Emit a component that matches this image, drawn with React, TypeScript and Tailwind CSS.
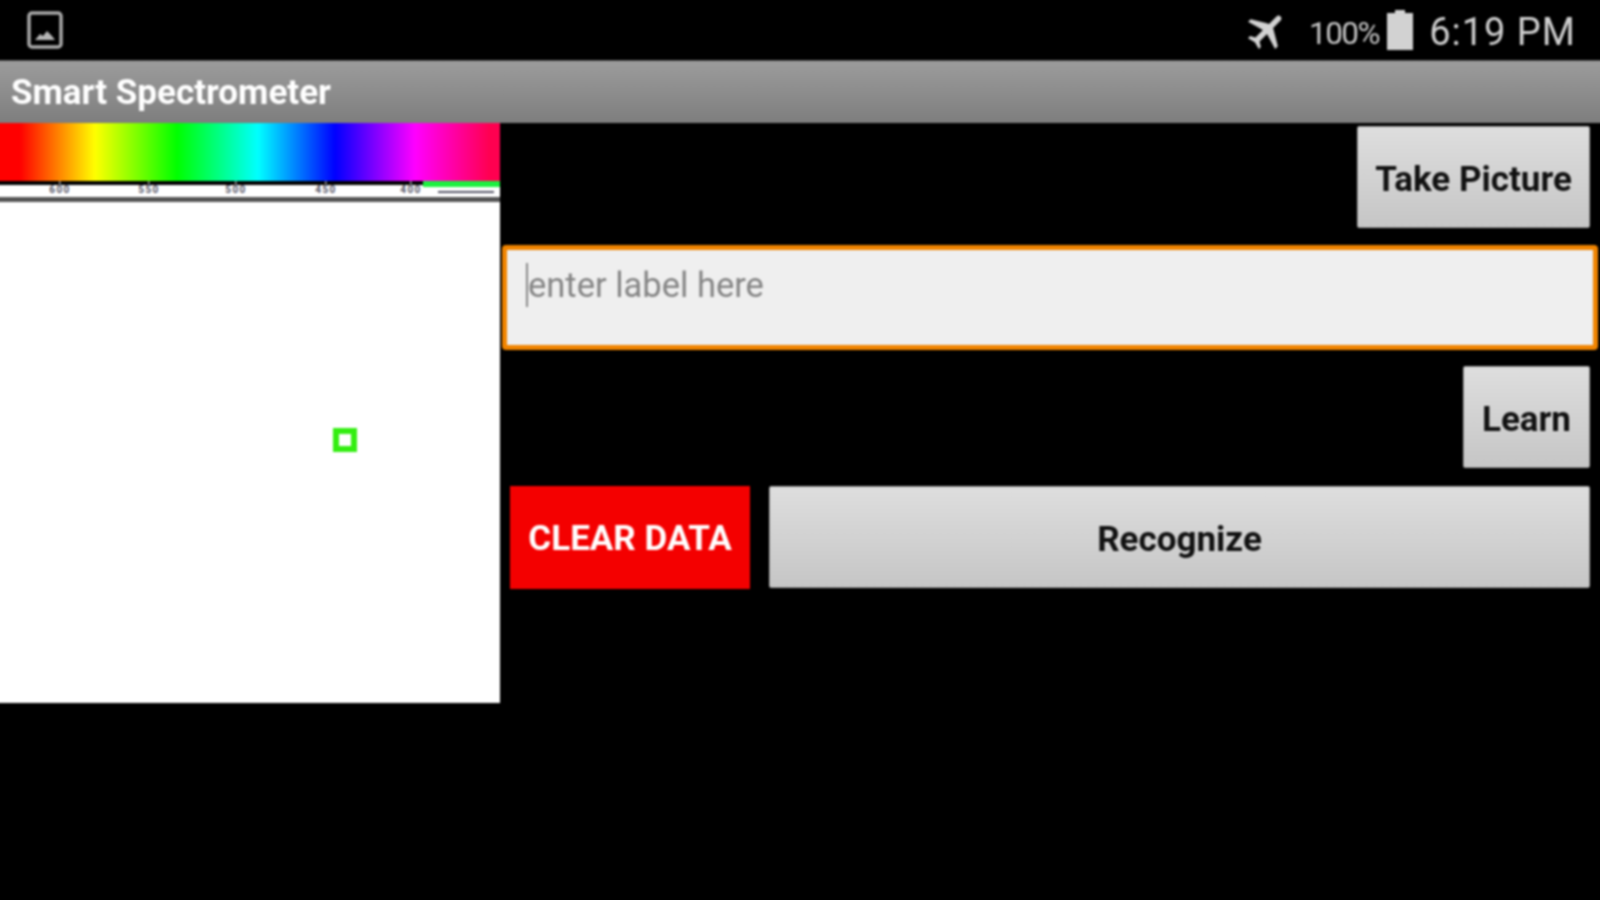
import { MdAirplanemodeActive } from "react-icons/md";

const RULER_LABELS = [
  { x: 65, text: "600" },
  { x: 154, text: "550" },
  { x: 241, text: "500" },
  { x: 331, text: "450" },
  { x: 416, text: "400" },
];

const BUTTON =
  "flex items-center justify-center h-[102px] pt-[6px] bg-gradient-to-b from-[#dedede] to-[#c6c6c6] border border-[#9a9a9a] rounded-[2px] text-[#111] text-[35px] font-bold";

function PictureIcon() {
  return (
    <svg width="36" height="38" viewBox="0 0 36 38" fill="none">
      <rect x="2" y="2" width="32" height="34" rx="3" stroke="#a8a8a8" strokeWidth="3.5" />
      <path d="M8 29 L13 23 L16 25 L20 20 L25 25 L28 29 Z" fill="#b5b5b5" />
    </svg>
  );
}

function Battery() {
  return (
    <svg width="26" height="40" viewBox="0 0 26 40" className="block">
      <path d="M8 0 H18 V3 H26 V40 H0 V3 H8 Z" fill="#d2d2d2" />
    </svg>
  );
}

// includes 5px bleed on the left so the blur doesn't darken the page edge
function Ruler() {
  return (
    <svg width="505" height="21" viewBox="0 0 505 21" className="block">
      <rect width="505" height="4" fill="#000" />
      <rect y="4" width="505" height="12" fill="#fff" />
      <rect x="428" y="0" width="77" height="6" fill="#1cf040" />
      <rect y="16" width="505" height="5" fill="#555" />
      {RULER_LABELS.map(({ x, text }) => (
        <g key={text}>
          <rect x={x - 1} y="0" width="1.5" height="5" fill="#999" />
          <text x={x} y="12" textAnchor="middle" fontSize="10" fontWeight="700" letterSpacing="1.5" fill="#556" fontFamily="Roboto, sans-serif">
            {text}
          </text>
        </g>
      ))}
      <rect x="443" y="10" width="56" height="2" fill="#556" />
    </svg>
  );
}

export default function App() {
  return (
    <div className="w-[1600px] h-[900px] bg-black overflow-hidden">
      <div className="w-[1610px] h-[900px] -ml-[5px] flex flex-col font-['Roboto',sans-serif] blur-[0.8px]">
        {/* Status bar */}
        <div className="h-[60px] shrink-0 flex items-center justify-between pl-[32px] pr-[29px]">
          <PictureIcon />
          <div className="flex items-center text-[#d2d2d2]">
            <MdAirplanemodeActive className="w-[46px] h-[46px] rotate-45 mr-[19px]" />
            <span className="text-[31.5px] tracking-[-1.5px] text-[#c4c4c4] pt-[7px]">100%</span>
            <span className="ml-[8px] mr-[16px]">
              <Battery />
            </span>
            <span className="text-[38px] tracking-[1px] text-[#cfcfcf] pt-[5px]">6:19 PM</span>
          </div>
        </div>

        {/* Title bar */}
        <div className="h-[63px] shrink-0 flex items-center pl-[16px] pt-[2px] bg-gradient-to-b from-[#9c9c9c] to-[#7e7e7e] border-t border-[#555]">
          <span className="text-white text-[35px] font-bold">Smart Spectrometer</span>
        </div>

        <div className="flex flex-1">
          {/* Spectrum panel */}
          <div className="w-[505px] h-[580px] shrink-0 flex flex-col bg-white relative">
            <div className="h-[58px] bg-[linear-gradient(to_right,#ff0000_25px,#ffff00_100px,#00ff00_182px,#00ffff_263px,#0000ff_340px,#ff00ff_420px,#ff0050_495px)]" />
            <Ruler />
            <div className="absolute left-[338px] top-[305px] w-[24px] h-[24px] border-[6px] border-[#33ee11]" />
          </div>

          {/* Controls */}
          <div className="flex-1 flex flex-col pr-[5px]">
            <div className="flex justify-end pt-[3px] pr-[10px]">
              <button className={`${BUTTON} w-[233px]`}>Take Picture</button>
            </div>
            <div className="mt-[17px] mx-[2px] h-[105px] border-[5px] border-[#f08400] rounded-[4px] bg-[#efefef] flex pl-[19px] pt-[13px]">
              <span className="w-[2px] h-[44px] bg-[#888]" />
              <span className="text-[34.5px] leading-[44px] text-[#858585]">enter label here</span>
            </div>
            <div className="flex justify-end mt-[16px] pr-[10px]">
              <button className={`${BUTTON} w-[127px]`}>Learn</button>
            </div>
            <div className="flex gap-[19px] mt-[18px] pl-[10px] pr-[10px]">
              <button className="w-[240px] h-[103px] pt-[4px] bg-[#f40000] text-white text-[35px] font-bold flex items-center justify-center">
                CLEAR DATA
              </button>
              <button className={`${BUTTON} flex-1`}>Recognize</button>
            </div>
          </div>
        </div>
      </div>
    </div>
  );
}
